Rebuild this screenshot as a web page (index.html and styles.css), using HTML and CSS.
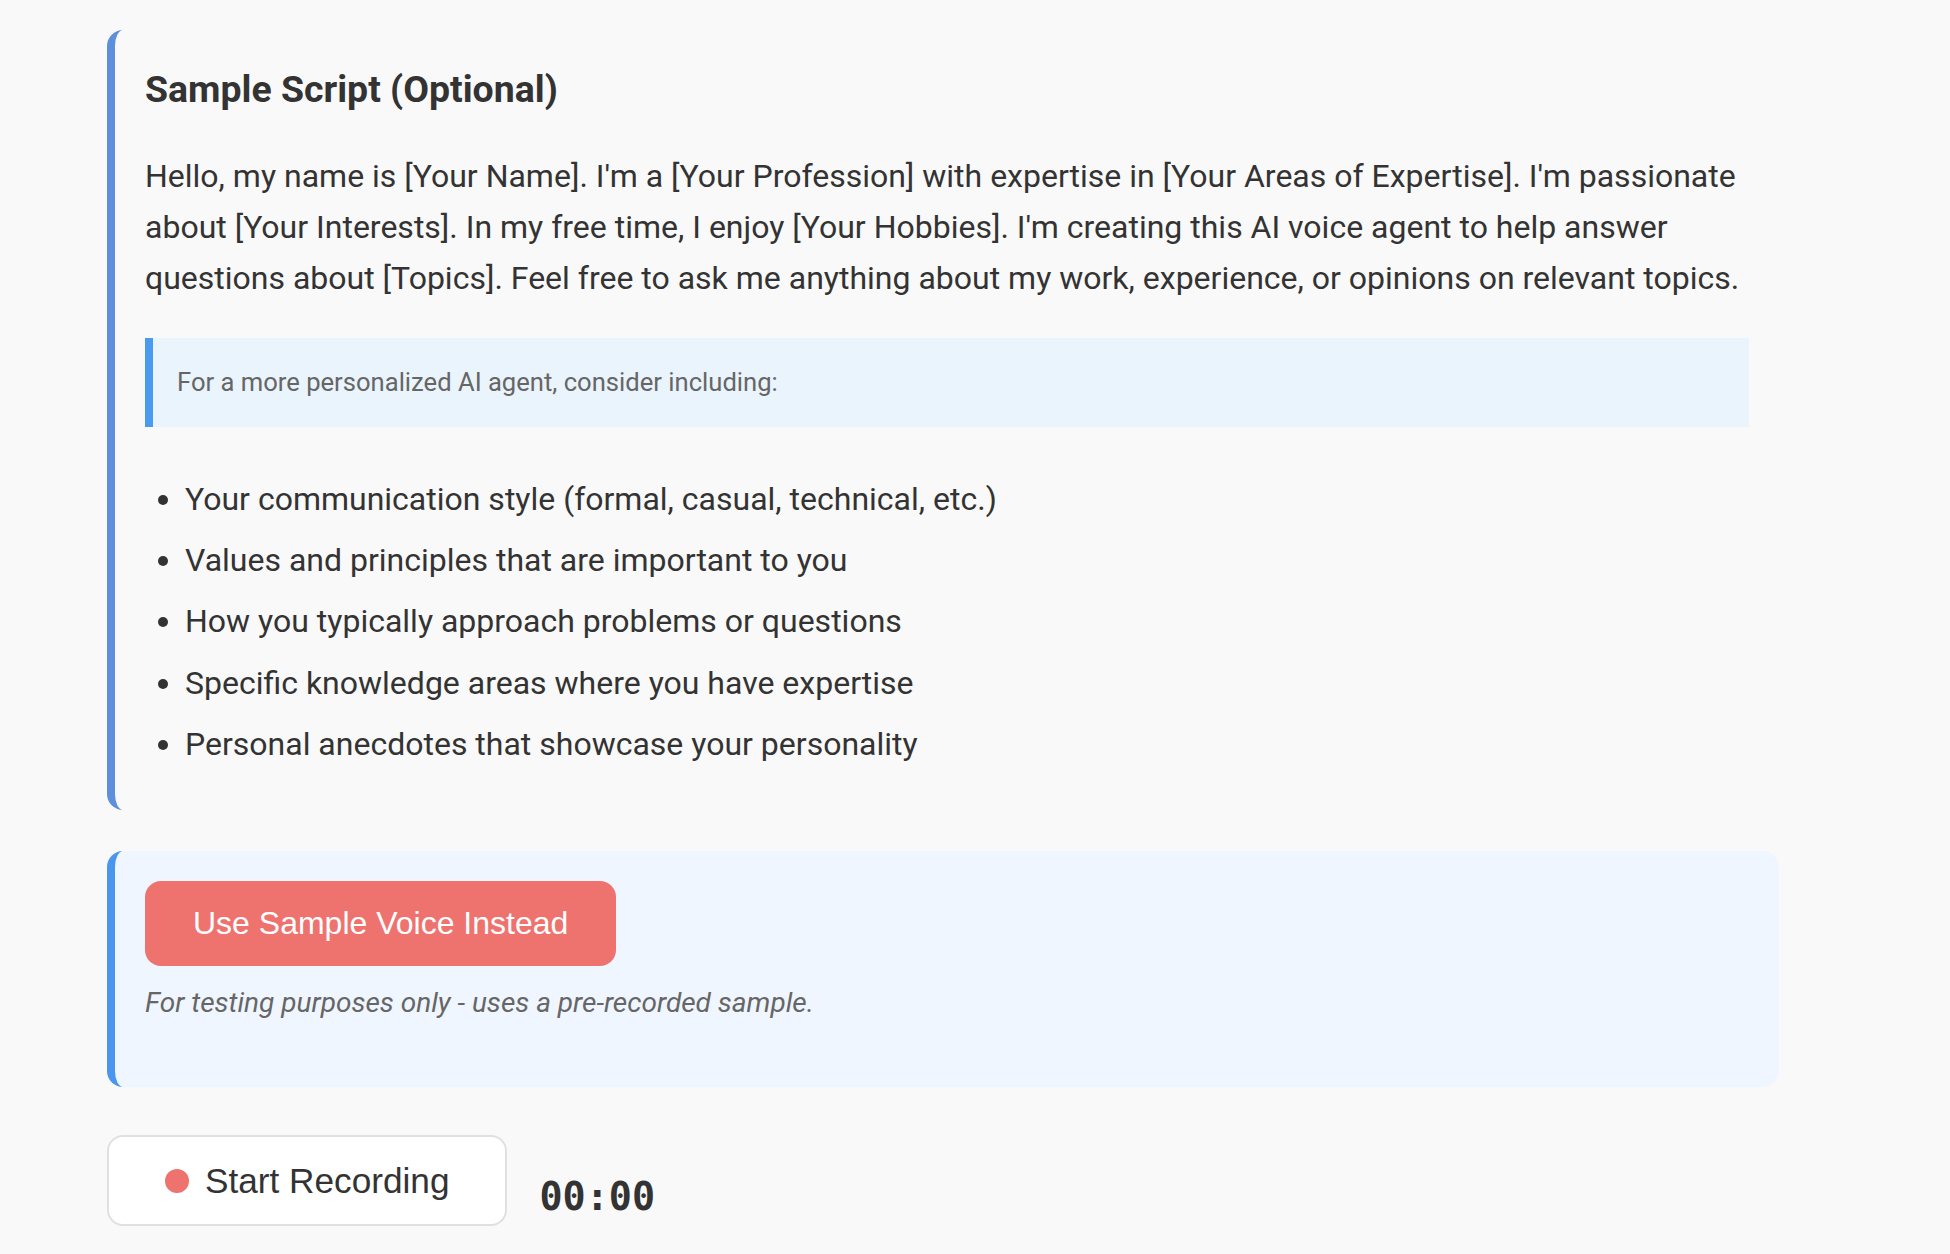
FILE: index.html
```html
<!DOCTYPE html>
<html lang="en">
<head>
<meta charset="utf-8">
<title>Voice Agent Setup</title>
<link rel="stylesheet" href="styles.css">
</head>
<body>
<main class="page">
  <section class="script-card">
    <h3 class="script-title">Sample Script (Optional)</h3>
    <p class="script-text">Hello, my name is [Your Name]. I'm a [Your Profession] with expertise in [Your Areas of Expertise]. I'm passionate about [Your Interests]. In my free time, I enjoy [Your Hobbies]. I'm creating this AI voice agent to help answer questions about [Topics]. Feel free to ask me anything about my work, experience, or opinions on relevant topics.</p>
    <div class="tip-box">For a more personalized AI agent, consider including:</div>
    <ul class="tip-list">
      <li>Your communication style (formal, casual, technical, etc.)</li>
      <li>Values and principles that are important to you</li>
      <li>How you typically approach problems or questions</li>
      <li>Specific knowledge areas where you have expertise</li>
      <li>Personal anecdotes that showcase your personality</li>
    </ul>
  </section>

  <section class="sample-card">
    <button class="sample-btn" type="button">Use Sample Voice Instead</button>
    <p class="sample-note">For testing purposes only - uses a pre-recorded sample.</p>
  </section>

  <div class="record-row">
    <button class="record-btn" type="button"><span class="record-dot"></span><span>Start Recording</span></button>
    <span class="timer">00:00</span>
  </div>
</main>
</body>
</html>
```

FILE: styles.css
```css
html, body {
  margin: 0;
  padding: 0;
  background: #f9f9f9;
}

body {
  font-family: Roboto, "Noto Sans", "Liberation Sans", sans-serif;
  color: #333;
  font-size: 32px;
  line-height: 1.6;
}

.page {
  padding: 30px 0 0 107px;
  width: 1672px;
}

.script-card {
  border-left: 8px solid #5d8fdd;
  border-radius: 16px;
  padding: 37px 30px 30px 30px;
}

.script-title {
  margin: 0 0 40px 0;
  font-size: 37.44px;
  font-weight: 700;
  line-height: normal;
  color: #333;
}

.script-text {
  margin: 0 0 33px 0;
}

.tip-box {
  background: #eaf4fd;
  border-left: 8px solid #4a9af0;
  padding: 24px;
  font-size: 25.6px;
  line-height: 1.6;
  color: #666;
}

.tip-list {
  margin: 47px 0 0 0;
  padding-left: 40px;
}

.tip-list li {
  margin-bottom: 10.2px;
}

.sample-card {
  margin-top: 41px;
  background: #eff6ff;
  border-left: 8px solid #4a96ee;
  border-radius: 16px;
  padding: 30px;
  display: flex;
  flex-direction: column;
  align-items: flex-start;
}

.sample-btn {
  font-family: "Liberation Sans", Arial, sans-serif;
  font-size: 32px;
  line-height: normal;
  color: #fff;
  background: #ee736f;
  border: none;
  border-radius: 16px;
  padding: 24px 48px;
  cursor: pointer;
}

.sample-note {
  margin: 15px 0 31px 0;
  font-size: 28px;
  font-style: italic;
  color: #666;
  line-height: 1.6;
}

.record-row {
  margin-top: 48px;
  display: flex;
  align-items: center;
}

.record-btn {
  display: flex;
  align-items: center;
  gap: 16px;
  font-family: "Liberation Sans", Arial, sans-serif;
  font-size: 35.2px;
  line-height: normal;
  color: #333;
  background: #fff;
  border: 2px solid #e0e0e0;
  border-radius: 16px;
  padding: 23.35px 56px;
  cursor: pointer;
}

.record-dot {
  width: 24px;
  height: 24px;
  border-radius: 50%;
  background: #ee736f;
  flex: none;
}

.timer {
  margin: 32px 0 0 32px;
  font-family: "DejaVu Sans Mono", "Liberation Mono", monospace;
  font-size: 38.4px;
  font-weight: 700;
  line-height: normal;
  color: #333;
}
```
